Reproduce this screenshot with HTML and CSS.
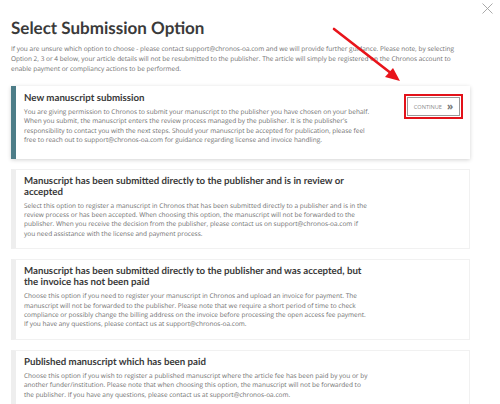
FILE: index.html
```html
<!DOCTYPE html>
<html>
<head>
<meta charset="utf-8">
<link rel="stylesheet" href="styles.css">
</head>
<body>
<div class="modal">
  <button class="close" aria-label="Close">
    <svg width="11" height="11" viewBox="0 0 11 11"><path d="M0.5 0.5 L10.5 10.5 M10.5 0.5 L0.5 10.5" stroke="#a0a0a0" stroke-width="0.9" fill="none"/></svg>
  </button>
  <h1 class="title">Select Submission Option</h1>
  <p class="intro">If you are unsure which option to choose - please contact support@chronos-oa.com and we will provide further guidance. Please note, by selecting Option 2, 3 or 4 below, your article details will not be resubmitted to the publisher. The article will simply be registered on the Chronos account to enable payment or compliancy actions to be performed.</p>

  <div class="options">
    <div class="card card-active">
      <div class="card-body">
        <h2 class="card-title">New manuscript submission</h2>
        <p class="card-text">You are giving permission to Chronos to submit your manuscript to the publisher you have chosen on your behalf. When you submit, the manuscript enters the review process managed by the publisher. It is the publisher's responsibility to contact you with the next steps. Should your manuscript be accepted for publication, please feel free to reach out to support@chronos-oa.com for guidance regarding license and invoice handling.</p>
      </div>
      <div class="highlight">
        <button class="continue">CONTINUE <span class="chev">&raquo;</span></button>
      </div>
    </div>

    <div class="card">
      <div class="card-body">
        <h2 class="card-title">Manuscript has been submitted directly to the publisher and is in review or accepted</h2>
        <p class="card-text">Select this option to register a manuscript in Chronos that has been submitted directly to a publisher and is in the review process or has been accepted. When choosing this option, the manuscript will not be forwarded to the publisher. When you receive the decision from the publisher, please contact us on support@chronos-oa.com if you need assistance with the license and payment process.</p>
      </div>
    </div>

    <div class="card">
      <div class="card-body">
        <h2 class="card-title">Manuscript has been submitted directly to the publisher and was accepted, but the invoice has not been paid</h2>
        <p class="card-text">Choose this option if you need to register your manuscript in Chronos and upload an invoice for payment. The manuscript will not be forwarded to the publisher. Please note that we require a short period of time to check compliance or possibly change the billing address on the invoice before processing the open access fee payment. If you have any questions, please contact us at support@chronos-oa.com.</p>
      </div>
    </div>

    <div class="card">
      <div class="card-body">
        <h2 class="card-title">Published manuscript which has been paid</h2>
        <p class="card-text">Choose this option if you wish to register a published manuscript where the article fee has been paid by you or by another funder/institution. Please note that when choosing this option, the manuscript will not be forwarded to the publisher. If you have any questions, please contact us at support@chronos-oa.com.</p>
      </div>
    </div>
  </div>

  <svg class="arrow" width="80" height="62" viewBox="0 0 80 62">
    <line x1="2" y1="2" x2="60" y2="47" stroke="#e8141b" stroke-width="2.6" stroke-linecap="round"/>
    <polygon points="68,54 53,50 61,41" fill="#e8141b"/>
  </svg>
</div>
</body>
</html>
```

FILE: styles.css
```css
* { box-sizing: border-box; }
html, body { margin: 0; padding: 0; background: #fff; }
body { width: 500px; height: 404px; overflow: hidden; font-family: "Open Sans", "DejaVu Sans", sans-serif; text-rendering: geometricPrecision; }

.modal { position: relative; padding: 17px 30px 0 11px; }

.close {
  position: absolute; top: 3px; right: 7px;
  border: 0; background: none; padding: 0; width: 11px; height: 11px; line-height: 0;
}

.title {
  margin: 0;
  font-family: Lato, "Open Sans", sans-serif;
  font-weight: 700;
  font-size: 17px;
  line-height: 22px;
  color: #3a3a3a;
}

.intro {
  width: 446px;
  margin: 5px 0 0;
  font-size: 6.5px;
  line-height: 10px;
  color: #6e6e6e;
}

.options { display: flex; flex-direction: column; gap: 10px; margin-top: 12px; }

.card {
  display: flex; justify-content: space-between; align-items: flex-start;
  background: #fff;
  border: 1px solid #f1f1f1;
  border-left: 5px solid #eeeeee;
  padding: 6px 7px 10px 8px;
}
.card-active {
  border: 0;
  border-left: 5px solid #4d7d88;
  box-shadow: 0 1px 4px rgba(0,0,0,0.18);
  padding: 7px 7px 14px 8px;
}

.card-body { width: 346px; }
.card-active .card-body { width: 352px; }

.card-title {
  margin: 0 0 3px;
  font-family: Lato, "Open Sans", sans-serif;
  font-weight: 700;
  font-size: 9.7px;
  line-height: 11px;
  color: #3a3a3a;
}

.card-text {
  margin: 0;
  font-size: 6.5px;
  line-height: 9.4px;
  color: #6e6e6e;
}

.highlight {
  margin-top: 1px;
  border: 2px solid #e3121a;
  padding: 1px;
}
.continue {
  display: flex; align-items: center; justify-content: center; gap: 5px;
  width: 53px; height: 19px;
  background: #fff;
  border: 1px solid #9a9a9a;
  font-family: "Open Sans", sans-serif;
  font-size: 5.6px;
  color: #8a8a8a;
  padding: 0;
}
.chev { font-size: 10px; line-height: 1; color: #777; font-weight: 700; margin-top: -1px; }

.arrow { position: absolute; left: 332px; top: 27px; }
```
